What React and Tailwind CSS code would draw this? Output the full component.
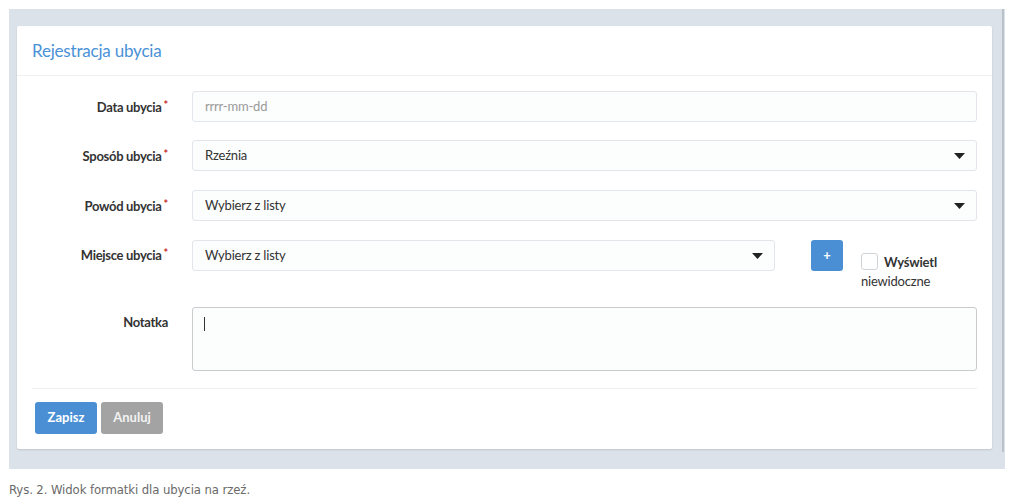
import React from "react";

const Caret = ({ className = "" }) => (
  <svg width="11" height="6" viewBox="0 0 11 6" className={className}>
    <path d="M0 0 H11 L5.5 6 Z" fill="#222" />
  </svg>
);

const Label = ({ children, req = true }) => (
  <div className="w-[136px] shrink-0 text-right text-[13px] font-bold text-[#333] tracking-[-0.3px] leading-[30px]">
    {children}
    {req && <span className="text-[#c9302c] text-[11px] font-bold align-top relative top-[-2px] ml-[2px]">*</span>}
  </div>
);

const Select = ({ value, className = "" }) => (
  <div className={`h-[31px] flex items-center justify-between pl-[12px] pr-[11px] bg-[#fcfdfd] border border-[#e2e6ea] rounded-[3px] text-[13px] text-[#333] tracking-[-0.2px] ${className}`}>
    <span>{value}</span>
    <Caret />
  </div>
);

export default function App() {
  return (
    <div className="w-[1024px] h-[503px] bg-white overflow-hidden" style={{ fontFamily: "Lato, 'Noto Sans', sans-serif" }}>
      <div className="ml-[9px] mt-[9px] w-[996px] h-[460px] bg-[#dbe2e9] flex items-start">
        <div className="ml-[8px] mt-[17px] w-[975px] h-[423px] bg-white rounded-[2px] shadow-[0_1px_2px_rgba(0,0,0,0.12)] flex flex-col">
          <div className="h-[50px] border-b border-[#eef0f2] px-[15px] flex items-center">
            <span className="text-[17px] text-[#4a91d6] tracking-[-0.2px]">Rejestracja ubycia</span>
          </div>
          <div className="px-[15px] pt-[15px] flex flex-col">
            <div className="flex items-center gap-[24px]">
              <Label>Data ubycia</Label>
              <div className="flex-1 h-[31px] flex items-center pl-[12px] bg-[#fcfdfd] border border-[#e2e6ea] rounded-[3px] text-[13px] text-[#9a9a9a] tracking-[-0.2px]">
                rrrr-mm-dd
              </div>
            </div>
            <div className="flex items-center gap-[24px] mt-[18px]">
              <Label>Sposób ubycia</Label>
              <Select value="Rzeźnia" className="flex-1" />
            </div>
            <div className="flex items-center gap-[24px] mt-[19px]">
              <Label>Powód ubycia</Label>
              <Select value="Wybierz z listy" className="flex-1" />
            </div>
            <div className="flex items-start gap-[24px] mt-[19px]">
              <Label>Miejsce ubycia</Label>
              <Select value="Wybierz z listy" className="w-[584px]" />
              <div className="flex items-start">
                <div className="ml-[12px] w-[32px] h-[31px] bg-[#4a8fd4] rounded-[3px] flex items-center justify-center text-white text-[13px] font-bold">
                  +
                </div>
                <div className="ml-[18px] mt-[13px] w-[116px] text-[13px] leading-[18px] text-[#333]">
                  <span className="inline-block align-middle w-[17px] h-[17px] border border-[#cfd4d9] rounded-[3px] bg-white mr-[6px] relative top-[-2px]"></span>
                  <span className="font-bold tracking-[-0.2px]">Wyświetl</span>{" "}
                  <span className="tracking-[-0.2px]">niewidoczne</span>
                </div>
              </div>
            </div>
            <div className="flex items-start gap-[24px] mt-[17px]">
              <Label req={false}>Notatka</Label>
              <div className="flex-1 h-[64px] bg-[#fcfdfd] border border-[#c9cccf] rounded-[3px] pl-[11px] pt-[9px]">
                <div className="w-[1px] h-[14px] bg-[#333]"></div>
              </div>
            </div>
            <div className="mt-[17px] h-px bg-[#eef0f2]"></div>
            <div className="flex gap-[4px] mt-[13px] ml-[3px]">
              <div className="w-[62px] h-[32px] bg-[#4a8fd4] rounded-[3px] flex items-center justify-center text-white text-[13px] font-bold">Zapisz</div>
              <div className="w-[62px] h-[32px] bg-[#a3a3a3] rounded-[3px] flex items-center justify-center text-[#f2f2f2] text-[13px] font-bold">Anuluj</div>
            </div>
          </div>
        </div>
        <div className="ml-[10px] w-[2px] h-[443px] bg-[#b9c1c9]"></div>
      </div>
      <div className="ml-[9px] mt-[11px] text-[13px] tracking-[-0.1px] text-[#6a6a6a]" style={{ fontFamily: "'Liberation Sans Narrow', 'DejaVu Sans Condensed', sans-serif" }}>
        Rys. 2. Widok formatki dla ubycia na rzeź.
      </div>
    </div>
  );
}
